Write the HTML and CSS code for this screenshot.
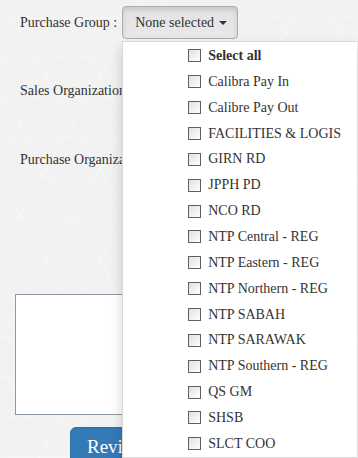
FILE: index.html
```html
<!DOCTYPE html>
<html>
<head>
<meta charset="utf-8">
<link rel="stylesheet" href="styles.css">
</head>
<body>
<div class="page">
  <div class="row row-group">
    <label class="lbl">Purchase Group :</label>
    <div class="btn-group">
      <button class="ms-btn">None selected <span class="caret"></span></button>
      <ul class="menu">
        <li><span class="cb"></span><b>Select all</b></li>
        <li><span class="cb"></span>Calibra Pay In</li>
        <li><span class="cb"></span>Calibre Pay Out</li>
        <li><span class="cb"></span>FACILITIES &amp; LOGIS</li>
        <li><span class="cb"></span>GIRN RD</li>
        <li><span class="cb"></span>JPPH PD</li>
        <li><span class="cb"></span>NCO RD</li>
        <li><span class="cb"></span>NTP Central - REG</li>
        <li><span class="cb"></span>NTP Eastern - REG</li>
        <li><span class="cb"></span>NTP Northern - REG</li>
        <li><span class="cb"></span>NTP SABAH</li>
        <li><span class="cb"></span>NTP SARAWAK</li>
        <li><span class="cb"></span>NTP Southern - REG</li>
        <li><span class="cb"></span>QS GM</li>
        <li><span class="cb"></span>SHSB</li>
        <li><span class="cb"></span>SLCT COO</li>
      </ul>
    </div>
  </div>
  <div class="row row-sales"><label class="lbl">Sales Organization</label></div>
  <div class="row row-porg"><label class="lbl">Purchase Organization</label></div>
  <textarea class="remarks"></textarea>
  <button class="review">Review</button>
</div>
</body>
</html>
```

FILE: styles.css
```css
html, body {
  margin: 0;
  padding: 0;
  height: 100%;
  overflow: hidden;
}
body {
  font-family: "Liberation Serif", "Times New Roman", serif;
  font-size: 14px;
  color: #333;
  background-color: #f2f2f2;
  background-image:
    repeating-linear-gradient(60deg, rgba(255,255,255,0.35) 0 1px, transparent 1px 46px),
    repeating-linear-gradient(-60deg, rgba(255,255,255,0.35) 0 1px, transparent 1px 46px),
    repeating-linear-gradient(0deg, rgba(255,255,255,0.3) 0 1px, transparent 1px 40px);
}
.page {
  padding-top: 6px;
  overflow: hidden;
}
.row {
  display: flex;
  align-items: center;
  padding-left: 20px;
}
.lbl {
  line-height: 20px;
  white-space: nowrap;
}
.row-group {
  gap: 5px;
  height: 33px;
}
.row-sales {
  margin-top: 42px;
}
.row-porg {
  margin-top: 49px;
}
.btn-group {
  position: relative;
}
.ms-btn {
  box-sizing: border-box;
  display: flex;
  align-items: center;
  gap: 4px;
  height: 33px;
  width: 116px;
  padding: 0 0 0 12px;
  white-space: nowrap;
  font-family: inherit;
  font-size: 14px;
  color: #333;
  background: linear-gradient(#e3e3e3, #e8e8e8);
  border: 1px solid #adadad;
  border-radius: 4px;
  box-shadow: inset 0 3px 5px rgba(0,0,0,0.125);
}
.caret {
  width: 0;
  height: 0;
  border-top: 4px solid #333;
  border-left: 4px solid transparent;
  border-right: 4px solid transparent;
  margin-left: 1px;
}
.menu {
  position: absolute;
  top: 35px;
  left: 0;
  box-sizing: border-box;
  width: 235px;
  margin: 0;
  padding: 1px 0 0;
  list-style: none;
  background: #fff;
  border: 1px solid rgba(0,0,0,0.15);
  border-right: 0;
  box-shadow: 0 6px 12px rgba(0,0,0,0.175);
  z-index: 10;
}
.menu li {
  display: flex;
  align-items: center;
  height: 25.87px;
  padding-left: 65px;
  white-space: nowrap;
}
.menu b {
  font-weight: bold;
}
.cb {
  box-sizing: border-box;
  width: 13px;
  height: 13px;
  border: 1px solid #5c6166;
  background: linear-gradient(135deg, #dde0e3, #ffffff);
  margin-right: 7px;
  flex: none;
}
.remarks {
  display: block;
  box-sizing: border-box;
  margin: 124px 0 0 15px;
  width: 300px;
  height: 121px;
  border: 1px solid #8c9aa8;
  background: #fff;
  resize: none;
}
.review {
  display: block;
  margin: 12px 0 0 70px;
  height: 40px;
  padding: 0 16px;
  font-family: inherit;
  font-size: 19px;
  color: #fff;
  background: #337ab7;
  border: 1px solid #2e6da4;
  border-radius: 6px;
}
```
